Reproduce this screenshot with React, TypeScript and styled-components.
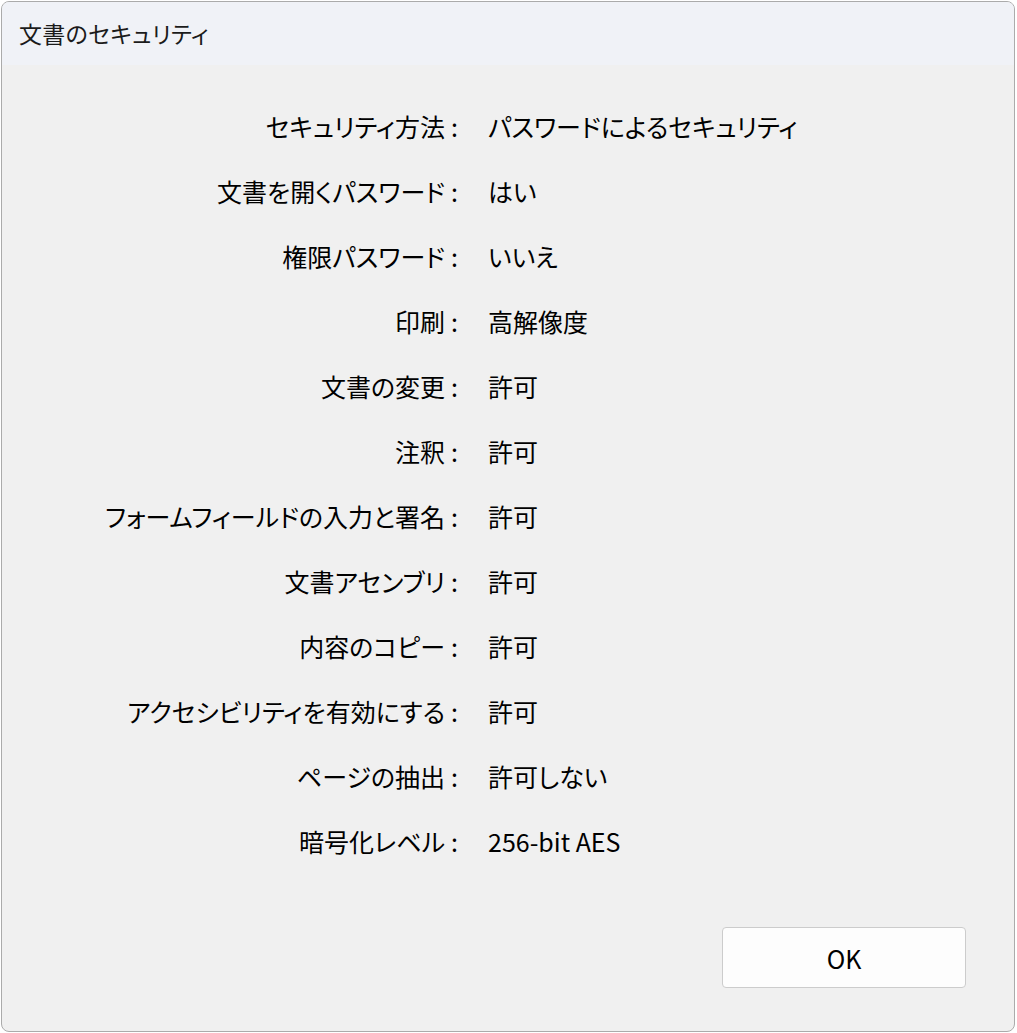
import React from "react";
import styled, { createGlobalStyle } from "styled-components";

const Global = createGlobalStyle`
  html, body {
    margin: 0;
    padding: 0;
    background: #ffffff;
  }
  body {
    font-family: "Noto Sans CJK JP", "Noto Sans", sans-serif;
    color: #000;
  }
`;

const Window = styled.div`
  box-sizing: border-box;
  margin: 1px 0 0 1px;
  width: 1014px;
  height: 1031px;
  border: 1px solid #ababab;
  border-radius: 8px;
  overflow: hidden;
  display: flex;
  flex-direction: column;
  background: #f0f0f0;
`;

const TitleBar = styled.div`
  height: 63px;
  flex: none;
  background: #f0f2f7;
  display: flex;
  align-items: center;
  padding-left: 17px;
  padding-bottom: 2px;
  box-sizing: border-box;
  font-size: 23px;
  font-feature-settings: "palt";
  letter-spacing: 0.3px;
  color: #1b1b1b;
`;

const Body = styled.div`
  flex: 1;
  display: flex;
  flex-direction: column;
  padding-top: 28px;
`;

const Grid = styled.div`
  display: grid;
  grid-template-columns: 443px 43px 1fr;
  grid-auto-rows: 65px;
  align-items: center;
  font-size: 25px;
  font-feature-settings: "palt";
`;

const Label = styled.div`
  text-align: right;
  white-space: nowrap;
`;

const Colon = styled.div`
  padding-left: 6px;
`;

const Value = styled.div`
  white-space: nowrap;
`;

const Footer = styled.div`
  flex: 1;
  display: flex;
  justify-content: flex-end;
  align-items: flex-start;
  padding: 54px 48px 0 0;
`;

const Button = styled.button`
  box-sizing: border-box;
  width: 244px;
  height: 61px;
  background: #fdfdfd;
  border: 1px solid #cccccc;
  border-radius: 4px;
  font-family: "Noto Sans CJK JP", "Noto Sans", sans-serif;
  font-size: 25px;
  color: #000;
  padding: 0;
`;

const rows: [string, string][] = [
  ["セキュリティ方法", "パスワードによるセキュリティ"],
  ["文書を開くパスワード", "はい"],
  ["権限パスワード", "いいえ"],
  ["印刷", "高解像度"],
  ["文書の変更", "許可"],
  ["注釈", "許可"],
  ["フォームフィールドの入力と署名", "許可"],
  ["文書アセンブリ", "許可"],
  ["内容のコピー", "許可"],
  ["アクセシビリティを有効にする", "許可"],
  ["ページの抽出", "許可しない"],
  ["暗号化レベル", "256-bit AES"],
];

export default function App() {
  return (
    <>
      <Global />
      <Window>
        <TitleBar>文書のセキュリティ</TitleBar>
        <Body>
          <Grid>
            {rows.map(([label, value]) => (
              <React.Fragment key={label}>
                <Label>{label}</Label>
                <Colon>:</Colon>
                <Value>{value}</Value>
              </React.Fragment>
            ))}
          </Grid>
          <Footer>
            <Button>OK</Button>
          </Footer>
        </Body>
      </Window>
    </>
  );
}
